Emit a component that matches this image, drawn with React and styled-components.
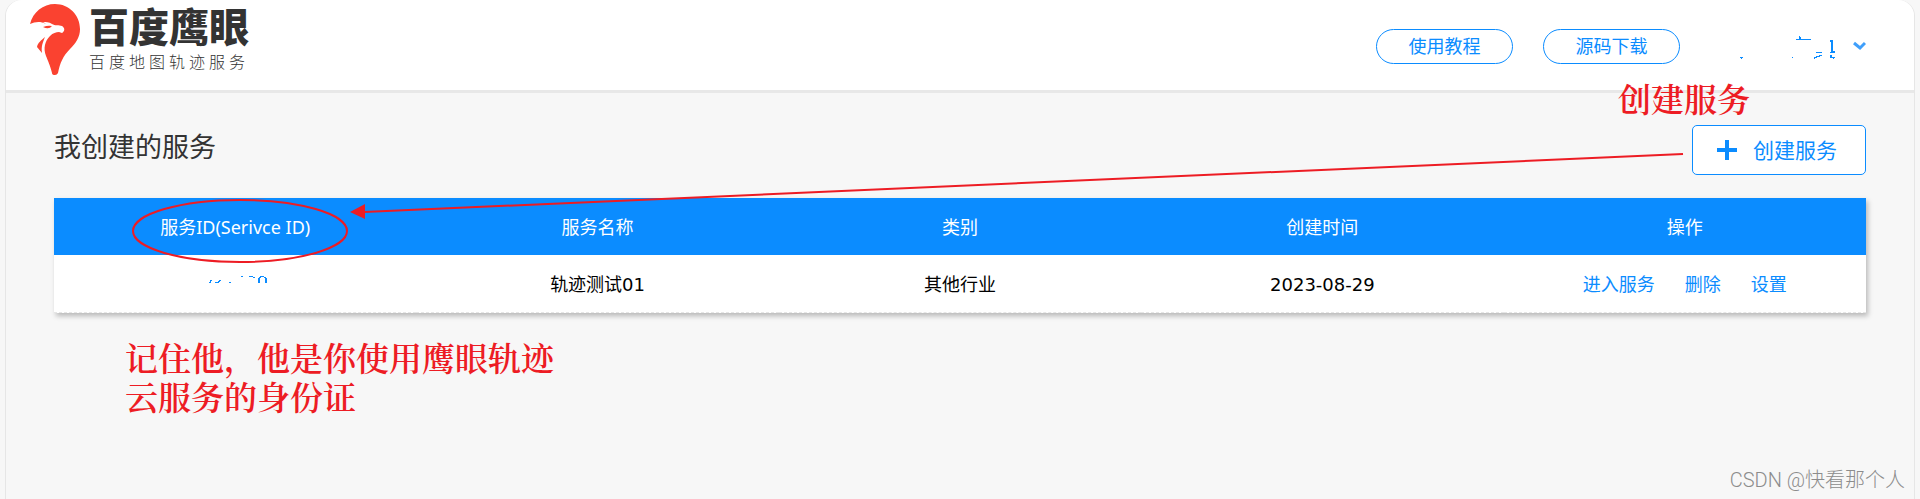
import styled, { createGlobalStyle } from "styled-components";

const columns = ["服务ID(Serivce ID)", "服务名称", "类别", "创建时间", "操作"];

const services = [
  { id: "130", name: "轨迹测试01", category: "其他行业", created: "2023-08-29" },
];

const Logo = () => (
  <LogoLink href="#home">
    <svg width="50" height="72" viewBox="0 0 50 72" aria-hidden="true">
      <path
        fill="#fa4230"
        d="M0 20 C3 8 13 0 25 0 C39 0 50 11 50 25 C50 33 46 39 40 45 C33 52 30 59 28 69 Q27 71 25 71 Q22 71 22 69 C20 61 18 57 16 52 C13 44 15 37 20 32 C23 29 26 28 29 28 L32 29 C35 27 35 24 32 22 C29 21 25 22 22 20 C19 18 16 18 13 18 Q15 19 16 20 C10 17 5 18 0 20 Z"
      />
      <path fill="#fa4230" d="M15 33 C13 38 11 42 12 49 L7 43 C8 38 11 37 15 33 Z" />
      <path fill="#fa4230" d="M13 23 Q18 21 22 22 Q19 26 13 23 Z" />
    </svg>
    <LogoText>
      <LogoName>百度鹰眼</LogoName>
      <LogoTagline>百度地图轨迹服务</LogoTagline>
    </LogoText>
  </LogoLink>
);

// the account name is blanked out, only a few strokes of it are left
const MaskedUser = () => (
  <svg width="127" height="35" viewBox="0 0 127 35" aria-hidden="true">
    <g fill="#0b8cff">
      <path d="M1 28h3v1h-1v1h-1v-1h-1z" />
      <path d="M53 28h1v1h-1z" />
      <path d="M57 10h3v-3h1v1h1v2h10v1h-15z" />
      <path d="M77 23h6v1h-6z" />
      <path d="M75 29v-1h2v-1h3v-1h3v1h-2v1h-3v1h-2v1h-1z" />
      <path d="M91 11h3v11h2v2h-5v-1h1v-10h-1z" />
      <path d="M91 26h2v2h3v1h-1v1h-1v-1h-3z" />
    </g>
    <path d="M115 14l6 5 5-5" fill="none" stroke="#3f9ffb" strokeWidth="3" />
  </svg>
);

const MaskedId = () => (
  <svg width="64" height="14" viewBox="0 0 64 14" aria-hidden="true">
    <g fill="#0b8cff">
      <path d="M6 7v-1h1v-2h2v1h-1v2z" />
      <path d="M12 6h3v-1h1v-1h2v1h-1v1h-1v1h-4z" />
      <path d="M26 6h2v1h-2z" />
      <path d="M38 0h2v1h-2z" />
      <path d="M46 0h4v1h2v1h-2v-1h-4z" />
      <path d="M55 7v-5h1v-1h1v-1h4v1h2v1h1v5h-2v-5h-1v-1h-3v1h-1v5z" />
    </g>
  </svg>
);

const App = () => {
  return (
    <>
      <GlobalStyle />
      <Frame>
        <Header>
          <Logo />
          <Nav>
            <PillLink href="#guide">使用教程</PillLink>
            <PillLink href="#source">源码下载</PillLink>
            <UserMenu type="button" aria-label="账号">
              <MaskedUser />
            </UserMenu>
          </Nav>
        </Header>
        <Main>
          <TitleRow>
            <h1>我创建的服务</h1>
            <CreateButton type="button">
              <svg width="20" height="20" viewBox="0 0 20 20" aria-hidden="true">
                <path d="M10 0v20M0 10h20" stroke="#0b8cff" strokeWidth="4" />
              </svg>
              创建服务
            </CreateButton>
          </TitleRow>
          <ServiceTable>
            <thead>
              <tr>
                {columns.map((column) => <th key={column}>{column}</th>)}
              </tr>
            </thead>
            <tbody>
              {services.map((service) => (
                <tr key={service.id}>
                  <td>
                    <MaskedId />
                  </td>
                  <td>{service.name}</td>
                  <td>{service.category}</td>
                  <td>{service.created}</td>
                  <td>
                    <Actions>
                      <a href="#enter">进入服务</a>
                      <a href="#delete">删除</a>
                      <a href="#settings">设置</a>
                    </Actions>
                  </td>
                </tr>
              ))}
            </tbody>
          </ServiceTable>
          <Note>
            记住他，他是你使用鹰眼轨迹
            <br />
            云服务的身份证
          </Note>
        </Main>
      </Frame>
      <CreateNote>创建服务</CreateNote>
      <Marks width="1560" height="120" viewBox="0 0 1560 120" aria-hidden="true">
        <ellipse cx="110" cy="81" rx="107" ry="31" />
        <path d="M1553 4L234 62" />
        <path className="head" d="M220 62l15-8v15z" />
      </Marks>
      <Watermark>CSDN @快看那个人</Watermark>
    </>
  );
};

export default App;

const GlobalStyle = createGlobalStyle`
  * {
    box-sizing: border-box;
  }

  body {
    margin: 0;
    background: #f7f7f7;
    color: #000;
    font: 400 18px/26px "Noto Sans", "Noto Sans CJK SC", sans-serif;
  }

  a {
    color: #0b8cff;
    text-decoration: none;
  }
`

const Frame = styled.div`
  min-height: 100vh;
  margin: 0 5px;
  border: solid #e6e6e6;
  border-width: 0 1px;
  border-radius: 16px 16px 0 0;
`

const Header = styled.header`
  display: flex;
  justify-content: space-between;
  height: 93px;
  padding: 4px 48px 0 24px;
  border-bottom: 3px solid #e8e8e8;
  border-radius: 16px 16px 0 0;
  background: #fff;
`

const LogoLink = styled.a`
  display: flex;
  align-items: flex-start;
  gap: 9px;
`

const LogoText = styled.div`
  display: flex;
  flex-direction: column;
  color: #333;
`

const LogoName = styled.strong`
  font-size: 40px;
  font-weight: 900;
  line-height: 46px;
`

const LogoTagline = styled.span`
  font-size: 16px;
  font-weight: 300;
  line-height: 24px;
  letter-spacing: 4px;
`

const Nav = styled.nav`
  display: flex;
  align-items: flex-start;
  gap: 30px;
  padding-top: 25px;
`

const PillLink = styled.a`
  width: 137px;
  border: 1px solid #0b8cff;
  border-radius: 18px;
  line-height: 33px;
  text-align: center;
`

const UserMenu = styled.button`
  display: flex;
  margin-left: 29px;
  padding: 0;
  border: 0;
  background: none;
`

const Main = styled.main`
  padding: 32px 48px;
`

const TitleRow = styled.div`
  display: flex;
  justify-content: space-between;
  margin-bottom: 23px;

  h1 {
    margin: 0;
    color: #333;
    font-size: 27px;
    font-weight: 400;
    line-height: 44px;
  }
`

const CreateButton = styled.button`
  display: flex;
  align-items: center;
  justify-content: center;
  gap: 16px;
  width: 174px;
  height: 50px;
  padding: 0 4px 0 0;
  border: 1px solid #0b8cff;
  border-radius: 5px;
  background: #fff;
  color: #0b8cff;
  font: inherit;
  font-size: 21px;
`

const ServiceTable = styled.table`
  width: 100%;
  table-layout: fixed;
  border-collapse: collapse;
  background: #fff;
  box-shadow: 2px 3px 5px rgba(0, 0, 0, 0.25);
  text-align: center;

  th {
    height: 57px;
    padding: 0;
    background: #0b8cff;
    color: #fff;
    font-weight: 400;
  }

  td {
    height: 57px;
    padding: 4px 0 0;
    border-bottom: 1px dashed #e6e6e6;
    font-family: "DejaVu Sans", "Noto Sans CJK SC", sans-serif;
  }

  svg {
    display: block;
    margin: 0 auto 4px;
  }
`

const Actions = styled.div`
  display: flex;
  justify-content: center;
  gap: 30px;
`

const Note = styled.p`
  margin: 24px 0 0 71px;
  color: #ed1c24;
  font-family: "Noto Serif CJK SC", "Noto Sans CJK SC", serif;
  font-size: 33px;
  font-weight: 600;
  line-height: 39px;
`

const CreateNote = styled(Note)`
  position: absolute;
  top: 78px;
  right: 170px;
  margin: 0;
`

const Marks = styled.svg`
  position: absolute;
  top: 150px;
  left: 130px;
  fill: none;
  stroke: #ed1c24;
  stroke-width: 2;
  pointer-events: none;

  .head {
    fill: #ed1c24;
    stroke: none;
  }
`

const Watermark = styled.div`
  position: absolute;
  right: 15px;
  bottom: 6px;
  color: #8c8c8c;
  font-family: Roboto, "Noto Sans CJK SC", sans-serif;
  font-size: 20px;
  font-weight: 300;
`
